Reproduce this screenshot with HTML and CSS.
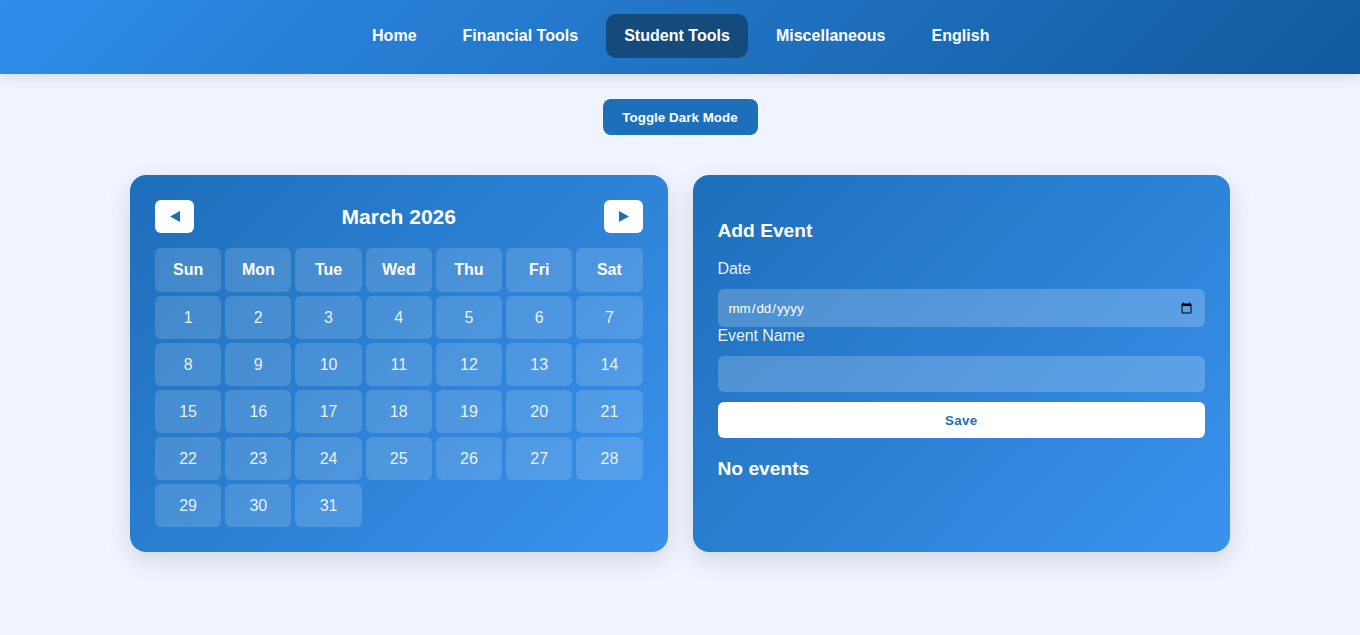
FILE: index.html
```html
<!DOCTYPE html>
<html lang="en">
<head>
    <meta charset="UTF-8">
    <meta name="viewport" content="width=device-width, initial-scale=1.0">
    <title>Student Calendar</title>
    <link rel="stylesheet" href="styles.css">
</head>
<body>
    <header class="topbar">
        <nav class="topnav">
            <a href="#">Home</a>
            <a href="#">Financial Tools</a>
            <a href="#" class="active">Student Tools</a>
            <a href="#">Miscellaneous</a>
            <a href="#">English</a>
        </nav>
    </header>

    <div class="toggle-row">
        <button type="button" class="toggle-btn">Toggle Dark Mode</button>
    </div>

    <main class="planner">
        <section class="panel">
            <div class="cal-header">
                <button type="button" class="cal-nav" aria-label="Previous month">
                    <svg width="10" height="11" viewBox="0 0 10 11"><polygon points="0,5.5 10,0 10,11"/></svg>
                </button>
                <h2>March 2026</h2>
                <button type="button" class="cal-nav" aria-label="Next month">
                    <svg width="10" height="11" viewBox="0 0 10 11"><polygon points="10,5.5 0,0 0,11"/></svg>
                </button>
            </div>
            <div class="cal-grid">
                <div class="cell head">Sun</div>
                <div class="cell head">Mon</div>
                <div class="cell head">Tue</div>
                <div class="cell head">Wed</div>
                <div class="cell head">Thu</div>
                <div class="cell head">Fri</div>
                <div class="cell head">Sat</div>
                <div class="cell">1</div>
                <div class="cell">2</div>
                <div class="cell">3</div>
                <div class="cell">4</div>
                <div class="cell">5</div>
                <div class="cell">6</div>
                <div class="cell">7</div>
                <div class="cell">8</div>
                <div class="cell">9</div>
                <div class="cell">10</div>
                <div class="cell">11</div>
                <div class="cell">12</div>
                <div class="cell">13</div>
                <div class="cell">14</div>
                <div class="cell">15</div>
                <div class="cell">16</div>
                <div class="cell">17</div>
                <div class="cell">18</div>
                <div class="cell">19</div>
                <div class="cell">20</div>
                <div class="cell">21</div>
                <div class="cell">22</div>
                <div class="cell">23</div>
                <div class="cell">24</div>
                <div class="cell">25</div>
                <div class="cell">26</div>
                <div class="cell">27</div>
                <div class="cell">28</div>
                <div class="cell">29</div>
                <div class="cell">30</div>
                <div class="cell">31</div>
            </div>
        </section>

        <section class="panel">
            <h3 class="form-title">Add Event</h3>
            <form class="event-form">
                <label for="event-date">Date</label>
                <input type="date" id="event-date">
                <label for="event-name">Event Name</label>
                <input type="text" id="event-name">
                <button type="button" class="save-btn">Save</button>
            </form>
            <h3 class="no-events">No events</h3>
        </section>
    </main>
</body>
</html>
```

FILE: styles.css
```css
* {
    box-sizing: border-box;
}

body {
    font-family: "Liberation Sans", Arial, sans-serif;
    background-color: #f0f4ff;
    color: #fff;
    margin: 0;
    padding: 0;
}

.topbar {
    height: 74px;
    padding-top: 14px;
    background: linear-gradient(135deg, #2f8dea, #125a9e);
    box-shadow: 0 4px 12px rgba(0, 0, 0, 0.1);
}

.topnav {
    display: flex;
    justify-content: center;
    gap: 10px;
    padding-left: 1.5px;
}

.topnav a {
    color: #fff;
    text-decoration: none;
    font-size: 16px;
    font-weight: 600;
    line-height: 20px;
    letter-spacing: 0.02px;
    padding: 12px 18px;
    border-radius: 10px;
}

.topnav a.active {
    background-color: #154a7d;
}

.toggle-row {
    display: flex;
    justify-content: center;
    margin-top: 25px;
}

.toggle-btn {
    width: 155px;
    height: 36px;
    padding: 0;
    border: none;
    border-radius: 8px;
    background-color: #1e6fba;
    color: #fff;
    font-family: inherit;
    font-size: 13.33px;
    font-weight: 700;
    letter-spacing: 0.05px;
}

.planner {
    display: grid;
    grid-template-columns: 1fr 1fr;
    gap: 25px;
    width: 1100px;
    margin: 40px auto 0;
    padding-bottom: 83px;
}

.panel {
    padding: 25px;
    border-radius: 16px;
    background: linear-gradient(135deg, #1e6fba, #3a92ee);
    box-shadow: 0 8px 24px rgba(0, 0, 0, 0.12);
}

.cal-header {
    display: flex;
    justify-content: space-between;
    align-items: center;
    margin-bottom: 15px;
}

.cal-header h2 {
    margin: 0;
    font-size: 21px;
    font-weight: 700;
}

.cal-nav {
    width: 38.8px;
    height: 33px;
    padding: 0 0 0 1px;
    border: none;
    border-radius: 6px;
    background-color: #fff;
    display: flex;
    align-items: center;
    justify-content: center;
}

.cal-nav svg {
    fill: #1e6fba;
}

.cal-grid {
    display: grid;
    grid-template-columns: repeat(7, 1fr);
    gap: 4px;
}

.cell {
    height: 43px;
    display: flex;
    align-items: center;
    justify-content: center;
    border-radius: 6px;
    background-color: rgba(255, 255, 255, 0.15);
    color: rgba(255, 255, 255, 0.9);
    font-size: 16px;
}

.cell.head {
    height: 44px;
    color: #fff;
    font-weight: 700;
}

.form-title {
    margin: 19.5px 0 18.9px;
    font-size: 19.2px;
}

.event-form {
    display: flex;
    flex-direction: column;
}

.event-form label {
    font-size: 16px;
    line-height: 18px;
    letter-spacing: -0.1px;
    color: rgba(255, 255, 255, 0.92);
    margin-bottom: 10.6px;
}

.event-form input {
    width: 100%;
    border: none;
    border-radius: 6px;
    background-color: rgba(255, 255, 255, 0.2);
    color: #fff;
    font-family: inherit;
    padding: 10px;
}

.event-form #event-date {
    height: 38px;
    padding-top: 11px;
    padding-bottom: 9px;
}

#event-name {
    height: 36px;
    margin-bottom: 10px;
}

.save-btn {
    height: 36px;
    padding-top: 2px;
    border: none;
    border-radius: 6px;
    background-color: #fff;
    color: #1e6fba;
    font-family: inherit;
    font-size: 13.33px;
    font-weight: 700;
    letter-spacing: 0.3px;
}

.no-events {
    margin: 20px 0 0;
    font-size: 19.2px;
}
```
